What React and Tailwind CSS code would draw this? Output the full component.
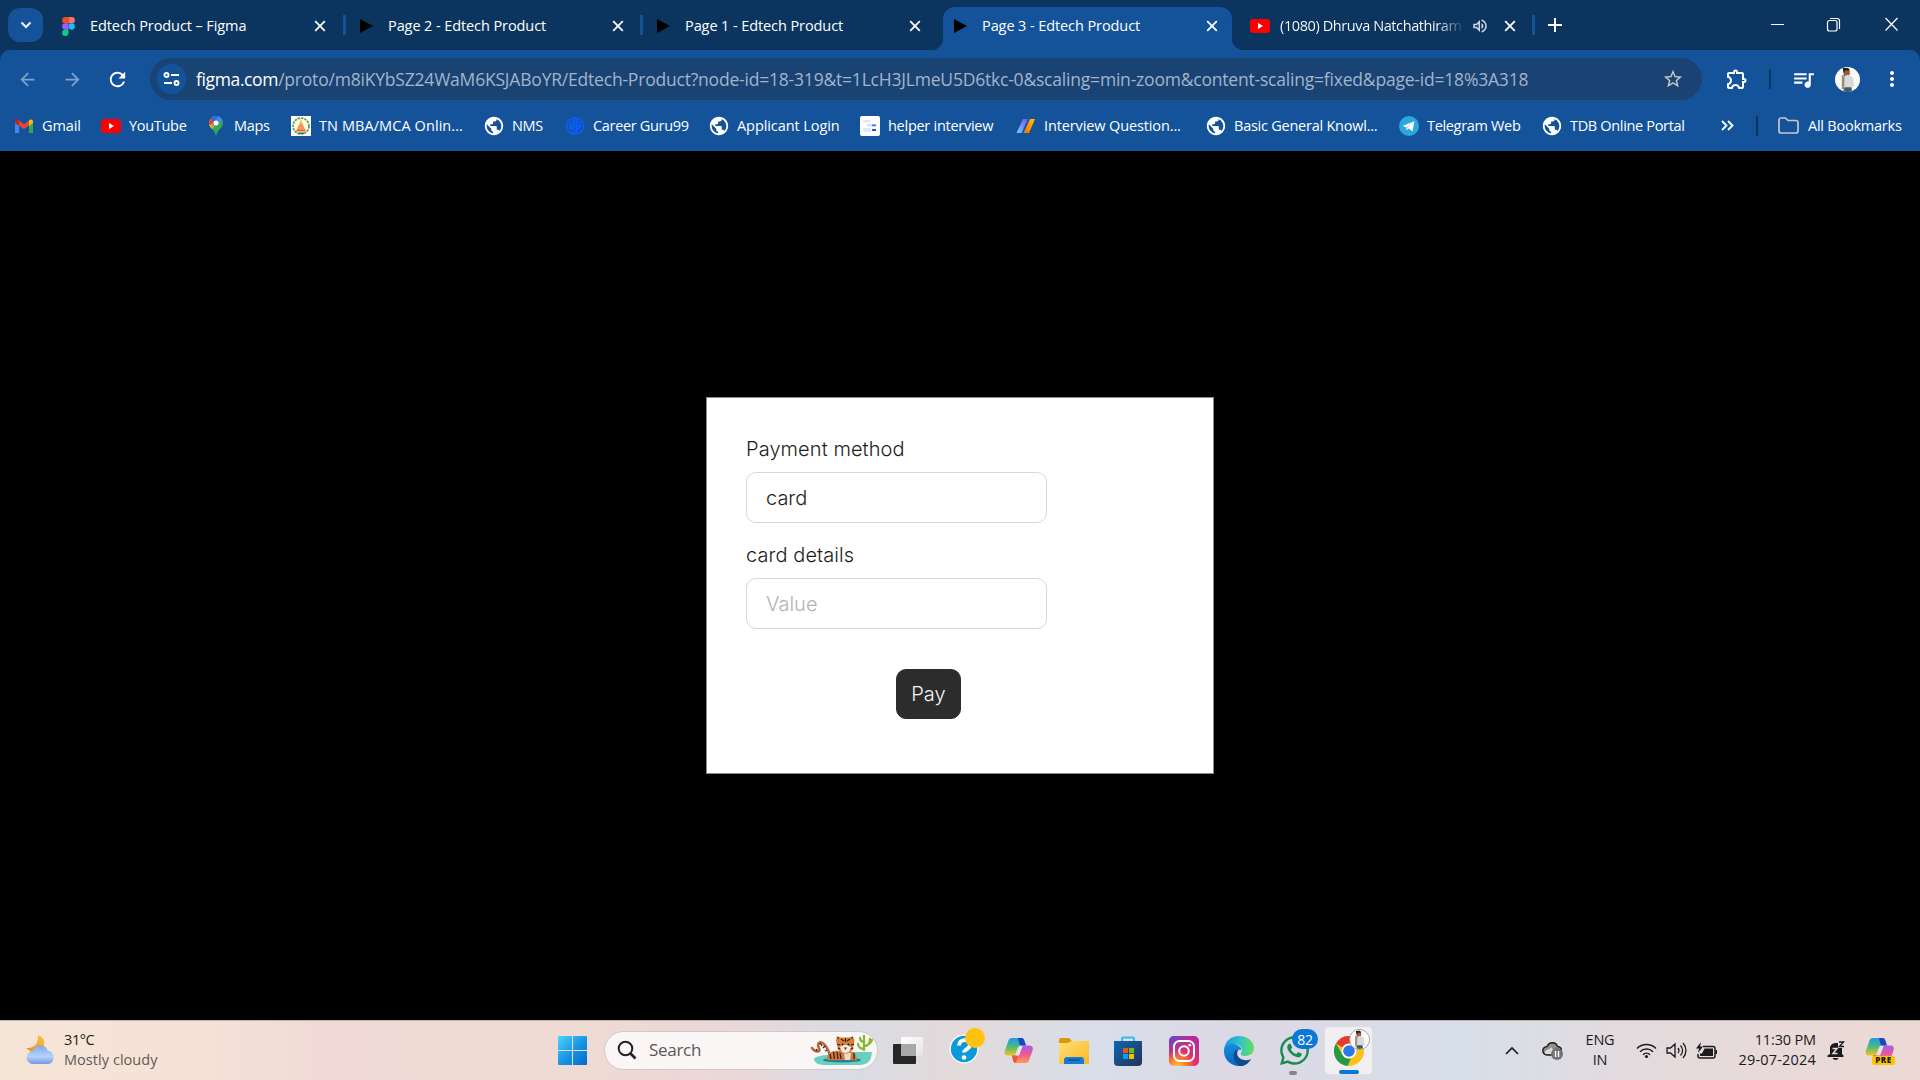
import React from "react";
import {
  MdOutlineExtension, MdQueueMusic, MdMoreVert, MdStarBorder, MdRefresh, MdArrowBack, MdArrowForward,
  MdOutlineVolumeUp, MdPublic,
} from "react-icons/md";
import { FaWhatsapp } from "react-icons/fa";

const Figma = () => (
  <svg width="13" height="19" viewBox="0 0 12 18">
    <path d="M3 0h3v6H3a3 3 0 0 1 0-6z" fill="#f24e1e" />
    <path d="M6 0h3a3 3 0 0 1 0 6H6z" fill="#ff7262" />
    <path d="M3 6h3v6H3a3 3 0 0 1 0-6z" fill="#a259ff" />
    <circle cx="9" cy="9" r="3" fill="#1abcfe" />
    <path d="M3 12h3v3a3 3 0 1 1-3-3z" fill="#0acf83" />
  </svg>
);
const Play = () => (
  <svg width="13" height="14" viewBox="0 0 13 14"><path d="M0 0L13 7L0 14z" fill="#000" /></svg>
);
const YouTube = () => (
  <svg width="20" height="20" viewBox="0 0 20 20">
    <rect x="0" y="3" width="20" height="14" rx="3.5" fill="#f00" />
    <path d="M8 7l5 3-5 3z" fill="#fff" />
  </svg>
);
const Gmail = () => (
  <svg width="20" height="20" viewBox="0 0 20 20">
    <path d="M1 5v12h4V8z" fill="#4285f4" />
    <path d="M19 5v12h-4V8z" fill="#34a853" />
    <path d="M5 4.500L10 8.300l5-3.800v5L10 13.300 5 9.500z" fill="#ea4335" />
    <path d="M15 4.500l.8-.6C17.200 2.900 19 3.800 19 5.500v1.600L15 10z" fill="#fbbc04" />
    <path d="M5 4.500l-.8-.6C2.800 2.900 1 3.800 1 5.500v1.600L5 10z" fill="#c5221f" />
  </svg>
);
const Maps = () => (
  <svg width="20" height="20" viewBox="0 0 20 20">
    <defs><clipPath id="pin"><path d="M10 0a7 7 0 0 1 7 7c0 5-5.500 6-7 13-1.500-7-7-8-7-13a7 7 0 0 1 7-7z" /></clipPath></defs>
    <g clipPath="url(#pin)">
      <rect width="20" height="20" fill="#34a853" />
      <path d="M0 8L10 7 5 15 0 16z" fill="#fbbc04" />
      <path d="M0 0h20v5L10 7 4 13z" fill="#4285f4" />
      <path d="M0 0h6L10 6 3 11z" fill="#ea4335" />
      <path d="M4.500 2.500L8 0h4L9 6z" fill="#1a73e8" />
      <path d="M3 9l4-1-2.500 5z" fill="#fbbc04" />
    </g>
    <circle cx="10" cy="7" r="2.500" fill="#fff" />
  </svg>
);
const Emblem = () => (
  <svg width="20" height="20" viewBox="0 0 20 20">
    <rect width="20" height="20" fill="#fff" />
    <circle cx="10" cy="10" r="8" fill="#fffbe0" stroke="#5b9a63" strokeWidth="1.700" strokeDasharray="2.500 .9" />
    <path d="M10 3l2.500 7 2 4h-9l2-4z" fill="#f3c24a" />
    <path d="M8.500 8h3l2 5h-7z" fill="#f2916a" />
    <path d="M5.500 13.500h9v2h-9z" fill="#e8604c" />
    <path d="M7 16.500h6v1.500H7z" fill="#2f7d46" />
  </svg>
);
const Globe = () => <span className="flex w-[20px] justify-center"><MdPublic size={22} className="shrink-0" /></span>;
const Guru = () => (
  <svg width="20" height="20" viewBox="0 0 20 20" fill="none" stroke="#0b5cff" strokeWidth="1.700">
    <circle cx="10" cy="10" r="8.200" />
    <path d="M8.700 2v16M11.300 2v16M8 6C4 6 4 14 7 13v-3H5M12 6c4 0 4 7 0 7M12 10h4" />
  </svg>
);
const Helper = () => (
  <svg width="20" height="20" viewBox="0 0 20 20">
    <rect width="20" height="20" rx="2" fill="#fff" />
    <rect x="3" y="4" width="8" height="2.500" rx="1" fill="#e2e8f2" /><rect x="3" y="12" width="8" height="4" rx="1" fill="#e2e8f2" />
    <rect x="7" y="8" width="9" height="2.500" rx="1" fill="#d5e0f5" />
    <rect x="12" y="8.500" width="4" height="1.700" fill="#3c7be8" /><rect x="12" y="13" width="4" height="2" fill="#2459c9" />
  </svg>
);
const Slashes = () => (
  <svg width="20" height="20" viewBox="0 0 20 20">
    <defs>
      <linearGradient id="sl1" x1="1" y1="0" x2="0" y2="1"><stop offset="0" stopColor="#6a55f5" /><stop offset=".5" stopColor="#7d8df5" /><stop offset="1" stopColor="#4fe3ee" /></linearGradient>
      <linearGradient id="sl2" x1="1" y1="0" x2="0" y2="1"><stop offset="0" stopColor="#ffc400" /><stop offset="1" stopColor="#ff6a00" /></linearGradient>
    </defs>
    <path d="M7 3h5L5.500 17H.5z" fill="url(#sl1)" /><path d="M14 3h5L13 17H7.500z" fill="url(#sl2)" />
  </svg>
);
const Telegram = () => (
  <svg width="20" height="20" viewBox="0 0 20 20">
    <circle cx="10" cy="10" r="10" fill="#2ca5e0" />
    <path d="M3.500 10l12-4.800-2 10-4-2.800-2 1.900-.4-3.100z" fill="#fff" />
    <path d="M7 11.500L12.500 8 8.500 12v1.500z" fill="#a9d6ee" />
  </svg>
);
const Close = () => (
  <svg width="12" height="12" viewBox="0 0 12 12" stroke="#fff" strokeWidth="1.800"><path d="M1.200 1.200l9.600 9.600M10.800 1.200L1.200 10.800" /></svg>
);

function Tab({ icon, title, active, children }) {
  return (
    <div className={active
      ? "relative flex h-[43px] w-[289px] shrink-0 items-center rounded-t-[12px] bg-[#14539a] pb-[8px] pl-[11px] pr-[14px] pt-[3px]"
      : "relative flex h-[43px] w-[289px] shrink-0 items-center pb-[8px] pl-[11px] pr-[14px] pt-[3px]"}>
      {active && (
        <>
          <span className="absolute bottom-0 -left-3 h-3 w-3 bg-[radial-gradient(circle_at_0_0,transparent_12px,#14539a_12.500px)]" />
          <span className="absolute bottom-0 -right-3 h-3 w-3 bg-[radial-gradient(circle_at_100%_0,transparent_12px,#14539a_12.500px)]" />
        </>
      )}
      <span className="flex w-[20px] shrink-0">{icon}</span>
      <span className="ml-[8px] whitespace-nowrap text-[14.500px] tracking-[-0.090px]">{title}</span>
      <span className="ml-auto flex">{children}<Close /></span>
    </div>
  );
}

const bookmarks = [
  [Gmail, "Gmail", "w-[87px] tracking-[-0.120px]"],
  [YouTube, "YouTube", "w-[105px] tracking-[-0.300px]"],
  [Maps, "Maps", "w-[85px] tracking-[-0.300px]"],
  [Emblem, "TN MBA/MCA Onlin...", "w-[193px] tracking-[0.080px]"],
  [Globe, "NMS", "w-[81px] tracking-[-0.400px]"],
  [Guru, "Career Guru99", "w-[144px] tracking-[-0.330px]"],
  [Globe, "Applicant Login", "w-[151px] tracking-[-0.080px]"],
  [Helper, "helper interview", "w-[155px] tracking-[-0.270px]"],
  [Slashes, "Interview Question...", "w-[191px] pl-[1px] tracking-[-0.120px]"],
  [Globe, "Basic General Knowl...", "w-[193px] tracking-[-0.240px]"],
  [Telegram, "Telegram Web", "w-[143px] tracking-[-0.330px]"],
  [Globe, "TDB Online Portal", "w-[179px] tracking-[-0.330px]"],
];

const Portrait = ({ size }) => (
  <svg width={size} height={size} viewBox="0 0 26 26">
    <defs><clipPath id={"face" + size}><circle cx="13" cy="13" r="13" /></clipPath></defs>
    <g clipPath={"url(#face" + size + ")"}>
      <rect width="26" height="26" fill="#fbfbfa" />
      <path d="M9 2h6l.5 5-2 3.500L9 10z" fill="#9a5a40" />
      <path d="M8 1h6l1 3-4-.5-2 3z" fill="#2a1d1a" />
      <path d="M9 10l4-2 6 3 1 9-3 2H9z" fill="#d7dad8" />
      <path d="M7 8l3 2-.5 13H7z" fill="#a38b7d" />
      <path d="M10 21h7l1 6H8z" fill="#3c5f66" />
    </g>
  </svg>
);

function Browser() {
  return (
    <header className="h-[151px] bg-[#0b355f] text-white">
      <div className="flex h-[50px] items-end">
        <div className="mb-2 ml-2 mr-[8px] flex h-[34px] w-[35px] items-center justify-center rounded-[12px] bg-[#14539a]">
          <svg width="12" height="8" viewBox="0 0 12 8" fill="none" stroke="#fff" strokeWidth="2"><path d="M1.500 1.500L6 6l4.500-4.500" /></svg>
        </div>
        <Tab icon={<Figma />} title="Edtech Product – Figma" />
        <span className="mb-[15px] ml-[3px] mr-[3px] h-[20px] w-[3px] bg-[#14539a]" />
        <Tab icon={<Play />} title="Page 2 - Edtech Product" />
        <span className="mb-[15px] ml-[2px] mr-[3px] h-[20px] w-[3px] bg-[#14539a]" />
        <Tab icon={<Play />} title="Page 1 - Edtech Product" />
        <span className="w-[8px]" />
        <Tab active icon={<Play />} title="Page 3 - Edtech Product" />
        <div className="ml-[18px] flex h-[43px] w-[266px] items-center pb-[8px] pt-[3px]">
          <YouTube />
          <span className="ml-[10px] w-[185px] overflow-hidden whitespace-nowrap bg-gradient-to-r from-white from-85% to-[#0b355f] bg-clip-text text-[14.500px] tracking-[-0.400px] text-transparent">(1080) Dhruva Natchathiram</span>
          <MdOutlineVolumeUp size={18} className="ml-[6px] shrink-0 text-[#cfd8e3]" />
          <span className="ml-auto flex"><Close /></span>
        </div>
        <span className="mb-[15px] ml-[16px] h-[20px] w-[3px] bg-[#14539a]" />
        <svg className="mb-[18px] ml-[13px]" width="14" height="14" viewBox="0 0 14 14" stroke="#fff" strokeWidth="2"><path d="M7 0v14M0 7h14" /></svg>
        <svg className="mb-[18px] ml-auto mr-[21px]" width="128" height="16" viewBox="0 0 128 16" fill="none" stroke="#fff" strokeWidth="1.200">
          <path d="M0 8.500h13M114.500 2l12 12.500M126.500 2l-12 12.500" />
          <rect x="56.500" y="4.500" width="9.500" height="10.500" rx="2" /><path d="M59 2.500h7a2.500 2.500 0 0 1 2.500 2.500v8" />
        </svg>
      </div>
      <div className="h-[101px] rounded-t-[10px] bg-[#14539a]">
        <div className="flex h-[58px] items-center">
          <MdArrowBack size={21} className="ml-[17px] text-[#7fa3cc]" />
          <MdArrowForward size={21} className="ml-[24px] text-[#7fa3cc]" />
          <MdRefresh size={23} className="ml-[23px]" />
          <div className="ml-[21px] flex h-[42px] w-[1552px] items-center rounded-full bg-[#194373] pl-[7px] pr-[18px]">
            <span className="flex h-[30px] w-[29px] items-center justify-center rounded-full bg-[#14539a]">
              <svg width="17" height="16" viewBox="0 0 17 16" fill="none" stroke="#fff" strokeWidth="1.900"><circle cx="3.500" cy="4" r="2" /><path d="M8 4h8M1 12h8" /><circle cx="13.500" cy="12" r="2" /></svg>
            </span>
            <span className="ml-[10px] whitespace-nowrap text-[17.500px] tracking-[-0.202px] text-[#a3b4ca]"><span className="tracking-[-0.370px] text-white">figma.com</span>/proto/m8iKYbSZ24WaM6KSJABoYR/Edtech-Product?node-id=18-319&amp;t=1LcH3JLmeU5D6tkc-0&amp;scaling=min-zoom&amp;content-scaling=fixed&amp;page-id=18%3A318</span>
            <MdStarBorder size={22} className="ml-auto text-[#c7c7c7]" />
          </div>
          <MdOutlineExtension size={24} className="ml-[23px]" />
          <span className="ml-[20px] h-[20px] w-[2px] bg-[#0b355f]" />
          <MdQueueMusic size={25} className="ml-[20px]" />
          <span className="ml-[19px]"><Portrait size={25} /></span>
          <MdMoreVert size={24} className="ml-[20px]" />
        </div>
        <div className="flex h-[35px] items-center pl-[14px] text-[14.500px] tracking-[-0.300px]">
          {bookmarks.map(([Icon, label, style]) => (
            <div key={label} className={"flex shrink-0 items-center whitespace-nowrap " + style}>
              <span className="mr-[8px] shrink-0"><Icon /></span>{label}
            </div>
          ))}
          <svg width="13" height="11" viewBox="0 0 13 11" fill="none" stroke="#fff" strokeWidth="1.800"><path d="M1 1l4.500 4.500L1 10M7 1l4.500 4.500L7 10" /></svg>
          <span className="ml-[22px] h-[20px] w-[2px] bg-[#0b355f]" />
          <svg className="ml-[20px] mr-[9px]" width="21" height="17" viewBox="0 0 21 17" fill="none" stroke="#c7c7c7" strokeWidth="1.700"><path d="M1 3a2 2 0 0 1 2-2h4.500l2.500 2.500h8a2 2 0 0 1 2 2V14a2 2 0 0 1-2 2H3a2 2 0 0 1-2-2z" /></svg>
          <span className="whitespace-nowrap tracking-[-0.230px]">All Bookmarks</span>
        </div>
      </div>
    </header>
  );
}

function Field({ label, value, muted }) {
  return (
    <div className="mb-[18px]">
      <div className="mb-[9px] h-[28px] text-[20px] leading-[28px] tracking-[0.080px]">{label}</div>
      <div className={muted
        ? "flex h-[51px] w-[301px] items-center rounded-[10px] border border-[#d9d9d9] pl-[19px] text-[20px] text-[#b3b3b3]"
        : "flex h-[51px] w-[301px] items-center rounded-[10px] border border-[#d9d9d9] pl-[19px] text-[20px]"}>{value}</div>
    </div>
  );
}

function Payment() {
  return (
    <main className="flex h-[869px] items-start justify-center bg-black pt-[246px]">
      <section className="h-[377px] w-[508px] border border-[#8a8a8a] bg-white pl-[39px] pt-[37px] font-['Inter',sans-serif] font-[350] text-[#1e1e1e]">
        <Field label="Payment method" value="card" />
        <Field label="card details" value="Value" muted />
        <button className="ml-[150px] mt-[40px] flex h-[50px] w-[65px] items-center justify-center rounded-[10px] border border-[#2c2c2c] bg-[#2c2c2c] text-[20px] text-[#f5f5f5]">Pay</button>
      </section>
    </main>
  );
}

const Weather = () => (
  <svg width="32" height="32" viewBox="0 0 32 32">
    <defs>
      <linearGradient id="moon" x1="0" y1="1" x2="1" y2="0"><stop offset="0" stopColor="#f08a1c" /><stop offset="1" stopColor="#fcc63a" /></linearGradient>
      <linearGradient id="cloud" x1="0" y1="0" x2="0" y2="1"><stop offset="0" stopColor="#84a9ea" /><stop offset=".6" stopColor="#b4d2fa" /><stop offset="1" stopColor="#7398e4" /></linearGradient>
    </defs>
    <path d="M13 1c6 2 8 8 5 13s-11 6-17 0c8 1 13-5 12-13z" fill="url(#moon)" />
    <path d="M8 30a6.500 6.500 0 0 1 0-13c1-4 5-6 8.500-5.600C20 12 22 14 22.500 16.500A7 7 0 0 1 24 30z" fill="url(#cloud)" />
  </svg>
);
const Start = () => (
  <svg width="30" height="30" viewBox="0 0 30 30">
    <defs><linearGradient id="win" x1="0" y1="0" x2="1" y2="1"><stop offset="0" stopColor="#4fd2ff" /><stop offset=".5" stopColor="#1a98e4" /><stop offset="1" stopColor="#0067d0" /></linearGradient></defs>
    <path d="M0 1a1 1 0 0 1 1-1h13v14H0zM15 0h13a1 1 0 0 1 1 1v13H15zM0 15h14v14H1a1 1 0 0 1-1-1zM15 15h14v13a1 1 0 0 1-1 1H15z" fill="url(#win)" />
  </svg>
);
const Tiger = () => (
  <svg width="64" height="34" viewBox="0 0 64 34">
    <path d="M33 19h29l-1 6c-2 5-6 7-12 7H14c-6 0-10-3-10-6 0-2 8-4 16-4z" fill="#68cfc1" />
    <ellipse cx="32" cy="27" rx="19" ry="2.600" fill="#287f92" />
    <path d="M20 24C19 15 12 7 9 10c-3 3 2 6 0 8-2 1-5 0-7-3" fill="none" stroke="#b86634" strokeWidth="2.600" strokeLinecap="round" />
    <path d="M17 27c0-7 5-10 13-9 6-1 17-1 17 9z" fill="#d07a3b" />
    <path d="M34 20h7l-1 7h-5z" fill="#f0dccb" />
    <path d="M27 3.500l4 1h8l4-1 1.500 4-1.500 9-5 4h-5l-5-4-2-9z" fill="#d9813c" />
    <path d="M30 14l3-2h4l4 2-2 5-3.500 1-3.500-1z" fill="#f6ece2" />
    <path d="M27 3.500l2 1-1 2zM43 3.500l-2 1 1 2z" fill="#33221d" />
    <path d="M31 6l3 2M35.500 5v4M40 6l-3 2M27 11l3 1M44 11l-3 1M28 15l2 1M43 15l-2 1M20 21l1 5M23.500 19l1 7M27 19l1 7M30 20l1 6M44 20l0 6M10 10l2 3M15 13l-2 2M6 18l1-2M17 17l-2 1" stroke="#33221d" strokeWidth="1.300" />
    <path d="M34 14.500h3L35.500 17z" fill="#432" /><circle cx="32.500" cy="11.500" r="1" fill="#221" /><circle cx="38.500" cy="11.500" r="1" fill="#221" />
    <path d="M54 17V3M54 16c-3 0-6-2-6-5M54 13c4 0 6-3 6-7M54 9c-3-.5-4-2-4-4M60 10l2-3" fill="none" stroke="#86b92a" strokeWidth="2.300" strokeLinecap="round" />
  </svg>
);
const TaskView = () => (
  <svg width="32" height="30" viewBox="0 0 32 30">
    <defs><linearGradient id="tv" x1="0" y1="0" x2="1" y2="1"><stop offset="0" stopColor="#fff" /><stop offset="1" stopColor="#e4e4e4" /></linearGradient></defs>
    <rect x="1" y="8" width="23" height="20" rx="1" fill="#262626" />
    <rect x="9" y="1" width="22" height="19" rx="1" fill="url(#tv)" /><path d="M9 8h15v12H9z" fill="#a8a8a8" />
  </svg>
);
const Help = () => (
  <svg width="38" height="38" viewBox="0 0 38 38">
    <circle cx="16" cy="22" r="14.500" fill="#fff" /><circle cx="16" cy="22" r="13.200" fill="#0c9bd9" />
    <path d="M11 18.500c0-7 11-7 11-.5 0 4-6 4-6 7.500" fill="none" stroke="#fff" strokeWidth="3.800" /><circle cx="16" cy="30.500" r="2.300" fill="#fff" />
    <circle cx="27" cy="11" r="10" fill="#ffc20e" />
  </svg>
);
const CopilotMark = ({ size = 30 }) => (
  <svg width={size} height={size} viewBox="0 0 30 30">
    <defs>
      <linearGradient id="cpa" x1="0" y1="0" x2="0" y2="1"><stop offset="0" stopColor="#1c9bea" /><stop offset=".5" stopColor="#4fb87a" /><stop offset="1" stopColor="#ecc81c" /></linearGradient>
      <linearGradient id="cpb" x1="0" y1="0" x2="0" y2="1"><stop offset="0" stopColor="#a45cf0" /><stop offset=".5" stopColor="#ec5a94" /><stop offset="1" stopColor="#ff9a55" /></linearGradient>
    </defs>
    <path d="M8 2h9c2.500 0 3 1.500 3.800 4l1.200 3.500h-4c-3 0-4 1-5 4l-.6 2c-.8 3-2 4-5 4H4c-3 0-4-2-3-5L4 6c.8-2.600 1.500-4 4-4z" fill="url(#cpa)" />
    <path d="M14 2h3c2.500 0 3 1.500 3.800 4l1.200 3.500h-4c-1.500 0-2.300-.5-2.700-2z" fill="#1b47c4" />
    <path d="M22 9.500h3c3.500 0 4.500 2 3.500 5l-3 8.500c-.8 2.600-1.500 4-4 4h-9c-2.500 0-3-1.500-3.800-4L8 19.500h3c3 0 4-1 5-4l1-2.500c1-3 2-3.500 5-3.500z" fill="url(#cpb)" />
    <path d="M8 19.500h3c1.500 0 2.500-.3 3.300-1.300L12 27c-2 0-2.700-1.500-3.300-4z" fill="#e85a34" />
    <path d="M17 10.500h1.500l-3.500 9h-3.500c2-1 2.500-3 3-5s1-3.500 2.500-4z" fill="#e4e8f0" />
  </svg>
);
const Explorer = () => (
  <svg width="32" height="30" viewBox="0 0 32 30">
    <defs><linearGradient id="fold" x1="0" y1="0" x2="1" y2="1"><stop offset="0" stopColor="#ffe07a" /><stop offset="1" stopColor="#fbb91d" /></linearGradient></defs>
    <path d="M1 4a2 2 0 0 1 2-2h8l3 3v5H1z" fill="#d99a0a" />
    <path d="M1 7h9l3-2h17a1 1 0 0 1 1 1v21a1 1 0 0 1-1 1H1z" fill="url(#fold)" />
    <path d="M6 28v-5a3 3 0 0 1 3-2h14a3 3 0 0 1 3 2v5z" fill="#167bd4" /><path d="M10 24h12" stroke="#0a4f94" strokeWidth="1.500" />
  </svg>
);
const Store = () => (
  <svg width="30" height="30" viewBox="0 0 30 30">
    <defs><linearGradient id="st" x1="0" y1="0" x2="1" y2="1"><stop offset="0" stopColor="#0d66b4" /><stop offset="1" stopColor="#243257" /></linearGradient></defs>
    <path d="M9 6V3a1.500 1.500 0 0 1 1.500-1.500h9A1.500 1.500 0 0 1 21 3v3" fill="none" stroke="#2fc0f2" strokeWidth="2" />
    <path d="M1 5h28v21a4 4 0 0 1-4 4H5a4 4 0 0 1-4-4z" fill="url(#st)" />
    <path d="M10 12h5v5h-5z" fill="#f25022" /><path d="M16 12h5v5h-5z" fill="#7fba00" /><path d="M10 18h5v5h-5z" fill="#00a4ef" /><path d="M16 18h5v5h-5z" fill="#ffb900" />
  </svg>
);
const Instagram = () => (
  <svg width="30" height="30" viewBox="0 0 30 30">
    <defs>
      <radialGradient id="ig" cx=".3" cy="1.050" r="1.050"><stop offset="0" stopColor="#ffd34f" /><stop offset=".25" stopColor="#fb8a2c" /><stop offset=".55" stopColor="#e1306c" /><stop offset="1" stopColor="#b82a9c" /></radialGradient>
      <radialGradient id="ig2" cx="0" cy="0" r=".7"><stop offset="0" stopColor="#5b4bd0" /><stop offset="1" stopColor="#5b4bd0" stopOpacity="0" /></radialGradient>
    </defs>
    <rect width="30" height="30" rx="5" fill="url(#ig)" /><rect width="30" height="30" rx="5" fill="url(#ig2)" />
    <g fill="none" stroke="#fff" strokeWidth="2"><rect x="5" y="5" width="20" height="20" rx="5.500" /><circle cx="15" cy="15" r="4.800" /></g>
    <circle cx="20.800" cy="9.200" r="1.400" fill="#fff" />
  </svg>
);
const Edge = () => (
  <svg width="30" height="30" viewBox="0 0 30 30">
    <defs>
      <linearGradient id="eg" x1="0" y1=".3" x2="1" y2=".4"><stop offset="0" stopColor="#1796dc" /><stop offset=".5" stopColor="#2ec0d2" /><stop offset="1" stopColor="#62e058" /></linearGradient>
      <linearGradient id="eb" x1="0" y1="0" x2="0" y2="1"><stop offset="0" stopColor="#168fdc" /><stop offset="1" stopColor="#0b62bd" /></linearGradient>
    </defs>
    <path d="M0 14C1 5 7 0 15 0c9 0 15 6 15 12 0 5-4 8-9 8-3 0-5-1-4-3 3-4-1-9-7-9-5 0-8 3-10 6z" fill="url(#eg)" />
    <path d="M0 15c0-5 5-8 10-7 4 .5 7 3 7.500 6-4-1-6 2-5 6 1 5 6 8 11 7-2 2-5 3-8 3C6 30 0 23 0 15z" fill="url(#eb)" />
    <path d="M12.500 13.500c-5 4-3 13 3 16.500 5 .5 9.500-3 11.500-7-4 2-9 1.500-12-1.500-2-2-2.500-4.500-1-7z" fill="#0c4b92" />
  </svg>
);
const Chrome = () => (
  <svg width="30" height="30" viewBox="0 0 30 30">
    <circle cx="15" cy="15" r="15" fill="#fbc116" />
    <path d="M2 7.500A15 15 0 0 1 28 7.500H15L8.500 11.300z" fill="#e33b2e" />
    <path d="M2 7.500L8.500 18.700A7.500 7.500 0 0 0 17 22.200L13.500 30A15 15 0 0 1 2 7.500z" fill="#229a48" />
    <circle cx="15" cy="15" r="7.500" fill="#fff" /><circle cx="15" cy="15" r="5.800" fill="#2f76e8" />
  </svg>
);

function Tray() {
  return (
    <div className="ml-auto flex h-full items-center text-[14.500px] text-[#1b1b1b]">
      <svg width="14" height="9" viewBox="0 0 14 9" fill="none" stroke="currentColor" strokeWidth="1.600"><path d="M1 8l6-6 6 6" /></svg>
      <svg className="ml-[23px]" width="21" height="19" viewBox="0 0 21 19">
        <path d="M5 14a4.200 4.200 0 0 1 0-8.400C7 .5 14 .5 15.500 5.500c5.500.5 5 8.500 0 8.500z" fill="#8f8f8f" />
        <path d="M3 13c-1-5 5-4 6.500-7l4 8z" fill="#dcdcdc" />
        <path d="M5 14a4.200 4.200 0 0 1 0-8.400C7 .5 14 .5 15.500 5.500c5.500.5 5 8.500 0 8.500z" fill="none" stroke="#1e1e1e" strokeWidth="1.400" />
        <circle cx="15" cy="13" r="6" fill="#737373" /><path d="M13.500 10v6M16.500 10v6" stroke="#fff" strokeWidth="1.400" />
      </svg>
      <div className="ml-[21px] mb-[2px] w-[32px] text-center leading-[20px] tracking-[-0.200px]">ENG<br />IN</div>
      <svg className="ml-[20px]" width="21" height="16" viewBox="0 0 21 16" fill="none" stroke="currentColor" strokeWidth="1.500"><path d="M1 5.500a13.500 13.500 0 0 1 19 0M4 8.700a9.300 9.300 0 0 1 13 0M7 11.700a5 5 0 0 1 7 0" /><circle cx="10.500" cy="13.500" r="1.600" fill="currentColor" stroke="none" /></svg>
      <svg className="ml-[9px]" width="21" height="17" viewBox="0 0 21 17" fill="none" stroke="currentColor" strokeWidth="1.300"><path d="M1 6v5h3.500L9 15V2L4.500 6zM12 6a4 4 0 0 1 0 5M14.500 3.500a7 7 0 0 1 0 10M17 1a11 11 0 0 1 0 15" /></svg>
      <svg className="ml-[9px]" width="22" height="18" viewBox="0 0 22 18"><path d="M7 4.500h10a2 2 0 0 1 2 2V14a2 2 0 0 1-2 2H4a2 2 0 0 1-2-2v-2" fill="none" stroke="currentColor" strokeWidth="1.500" /><path d="M8.500 6.500h8.500V14H4v-2.500h2zM19.500 8h1.500v4h-1.500zM5 0L0 6.500h3L2 11l5-6.500H4z" fill="currentColor" /></svg>
      <div className="mb-[2px] ml-[18px] w-[80px] whitespace-nowrap text-right leading-[20px]"><span className="tracking-[-0.150px]">11:30 PM</span><br /><span className="tracking-[0.180px]">29-07-2024</span></div>
      <svg className="ml-[11px]" width="18" height="20" viewBox="0 0 18 20"><path d="M3 13V8a5.500 5.500 0 0 1 6-6h2v5h4v6l1.500 1.500V16H.5v-1.500zM5.500 17h6c-.8 2.500-5 2.500-6 0z" fill="currentColor" /><path d="M5.500 7.500H10l-4 5h4.500" fill="none" stroke="#e7dbdb" strokeWidth="1.500" /><path d="M12 1h4.500l-4 4.500H17" fill="none" stroke="currentColor" strokeWidth="1.400" /></svg>
      <div className="relative mr-[25px] ml-[20px] flex">
        <CopilotMark size={30} />
        <span className="absolute left-[7px] top-[20px] flex h-[9px] w-[23px] items-center justify-center rounded-[2px] bg-[#ffc400] text-[8px] font-extrabold leading-none tracking-[0.500px]">PRE</span>
      </div>
    </div>
  );
}

function Taskbar() {
  return (
    <footer className="flex h-[60px] items-center border-t border-[#bdb3ae] bg-[linear-gradient(90deg,#f5e5d6_0%,#f5e2d8_10%,#f1dad6_17%,#eedbd3_30%,#ead7d8_38%,#d9dce4_44%,#e3d9da_50%,#d8deea_57%,#dcd8e4_65%,#d6dfea_76%,#e2dbdf_84%,#e8dad9_92%,#ecd9d3_100%)]">
      <div className="ml-[25px] flex w-[533px] items-center">
        <span className="-mt-[2px]"><Weather /></span>
        <div className="mb-[2px] ml-[7px] text-[14.500px] leading-[20px] text-[#1b1b1b]"><span className="tracking-[-0.400px]">31°C</span><br /><span className="tracking-[0.050px] text-[#5f5a57]">Mostly cloudy</span></div>
      </div>
      <Start />
      <div className="ml-[16px] mb-[1px] flex h-[39px] w-[274px] items-center rounded-full border border-[#d2c8c8] bg-[#faf6f5] pl-[12px]">
        <svg width="20" height="20" viewBox="0 0 20 20" fill="none" stroke="#222" strokeWidth="2"><circle cx="8.500" cy="8.500" r="6.800" /><path d="M13.500 13.500l5 5" strokeWidth="2.600" /></svg>
        <span className="ml-[12px] text-[17px] tracking-[-0.300px] text-[#5c5857]">Search</span>
        <span className="ml-auto mr-[3px]"><Tiger /></span>
      </div>
      <div className="ml-[14px] flex h-full items-center">
        <div className="w-[56px]"><TaskView /></div>
        <div className="w-[56px] pb-[9px]"><Help /></div>
        <div className="w-[54px]"><CopilotMark /></div>
        <div className="w-[55px]"><Explorer /></div>
        <div className="w-[56px]"><Store /></div>
        <div className="w-[55px]"><Instagram /></div>
        <div className="w-[54px]"><Edge /></div>
        <div className="relative w-[46px]">
          <FaWhatsapp size={33} className="text-[#178c53]" />
          <span className="absolute -top-[5px] left-[14px] flex h-[20px] w-[26px] items-center justify-center rounded-full bg-[#0a78d4] text-[14px] tracking-[-0.300px] text-white">82</span>
          <span className="absolute left-[11px] top-[37px] h-[4px] w-[8px] rounded-full bg-[#858585]" />
        </div>
        <div className="relative flex h-[49px] w-[49px] items-center justify-center rounded-[5px] border border-[#e1dce0] bg-[#f2eff2]">
          <Chrome />
          <span className="absolute right-[2px] top-[2px] rounded-full border border-[#9c9c9c]"><Portrait size={19} /></span>
          <span className="absolute bottom-0 left-[14px] h-[4px] w-[20px] rounded-full bg-[#0a78d4]" />
        </div>
      </div>
      <Tray />
    </footer>
  );
}

export default function App() {
  return (
    <div className="h-[1080px] w-[1920px] overflow-hidden bg-black font-['Open_Sans','Noto_Sans',sans-serif]">
      <Browser />
      <Payment />
      <Taskbar />
    </div>
  );
}
